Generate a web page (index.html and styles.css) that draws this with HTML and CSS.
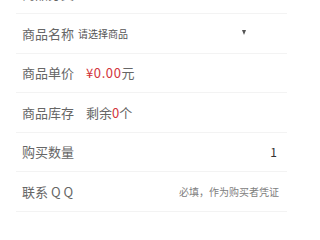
FILE: index.html
```html
<!DOCTYPE html>
<html lang="zh">
<head>
<meta charset="utf-8">
<link rel="stylesheet" href="styles.css">
</head>
<body>
<div class="list">
  <div class="row">
    <span class="label">商品分类</span>
    <span class="value muted-sm">请选择分类</span>
  </div>
  <div class="row">
    <span class="label label-select">商品名称</span>
    <div class="select">
      <span class="select-text">请选择商品</span>
      <span class="caret"></span>
    </div>
  </div>
  <div class="row">
    <span class="label">商品单价</span>
    <span class="value price"><span class="red">¥0.00</span>元</span>
  </div>
  <div class="row">
    <span class="label">商品库存</span>
    <span class="value">剩余<span class="red">0</span>个</span>
  </div>
  <div class="row">
    <span class="label">购买数量</span>
    <span class="value right dark">1</span>
  </div>
  <div class="row">
    <span class="label">联系 Q Q</span>
    <span class="value right placeholder">必填，作为购买者凭证</span>
  </div>
</div>
</body>
</html>
```
FILE: styles.css
```css
html, body {
  margin: 0;
  padding: 0;
  background: #ffffff;
}
body {
  font-family: "Noto Sans CJK SC", "Noto Sans", sans-serif;
  width: 300px;
  height: 230px;
  overflow: hidden;
}
.list {
  margin: -25.5px 13px 0 16px;
}
.row {
  display: flex;
  align-items: center;
  height: 39.5px;
  box-sizing: border-box;
  border-bottom: 1px solid #f3f3f3;
  padding: 0 10px 0 6px;
}
.label {
  width: 64px;
  flex: none;
  font-size: 13px;
  color: #666666;
  white-space: nowrap;
}
.label-select {
  width: 56px;
}
.value {
  flex: 1;
  font-size: 13px;
  color: #666666;
}
.price {
  letter-spacing: 0.6px;
}
.muted-sm {
  font-size: 10px;
  margin-left: -8px;
  color: #555;
}
.red {
  color: #d2333b;
}
.right {
  text-align: right;
}
.dark {
  color: #333333;
  font-size: 12px;
}
.placeholder {
  font-size: 10px;
  color: #808080;
  margin-right: -2px;
}
.select {
  width: 168px;
  display: flex;
  align-items: center;
  justify-content: space-between;
}
.select-text {
  font-size: 10px;
  color: #555555;
}
.caret {
  width: 0;
  height: 0;
  border-left: 2.5px solid transparent;
  border-right: 2.5px solid transparent;
  border-top: 5px solid #555555;
  margin-top: -2px;
}
```
